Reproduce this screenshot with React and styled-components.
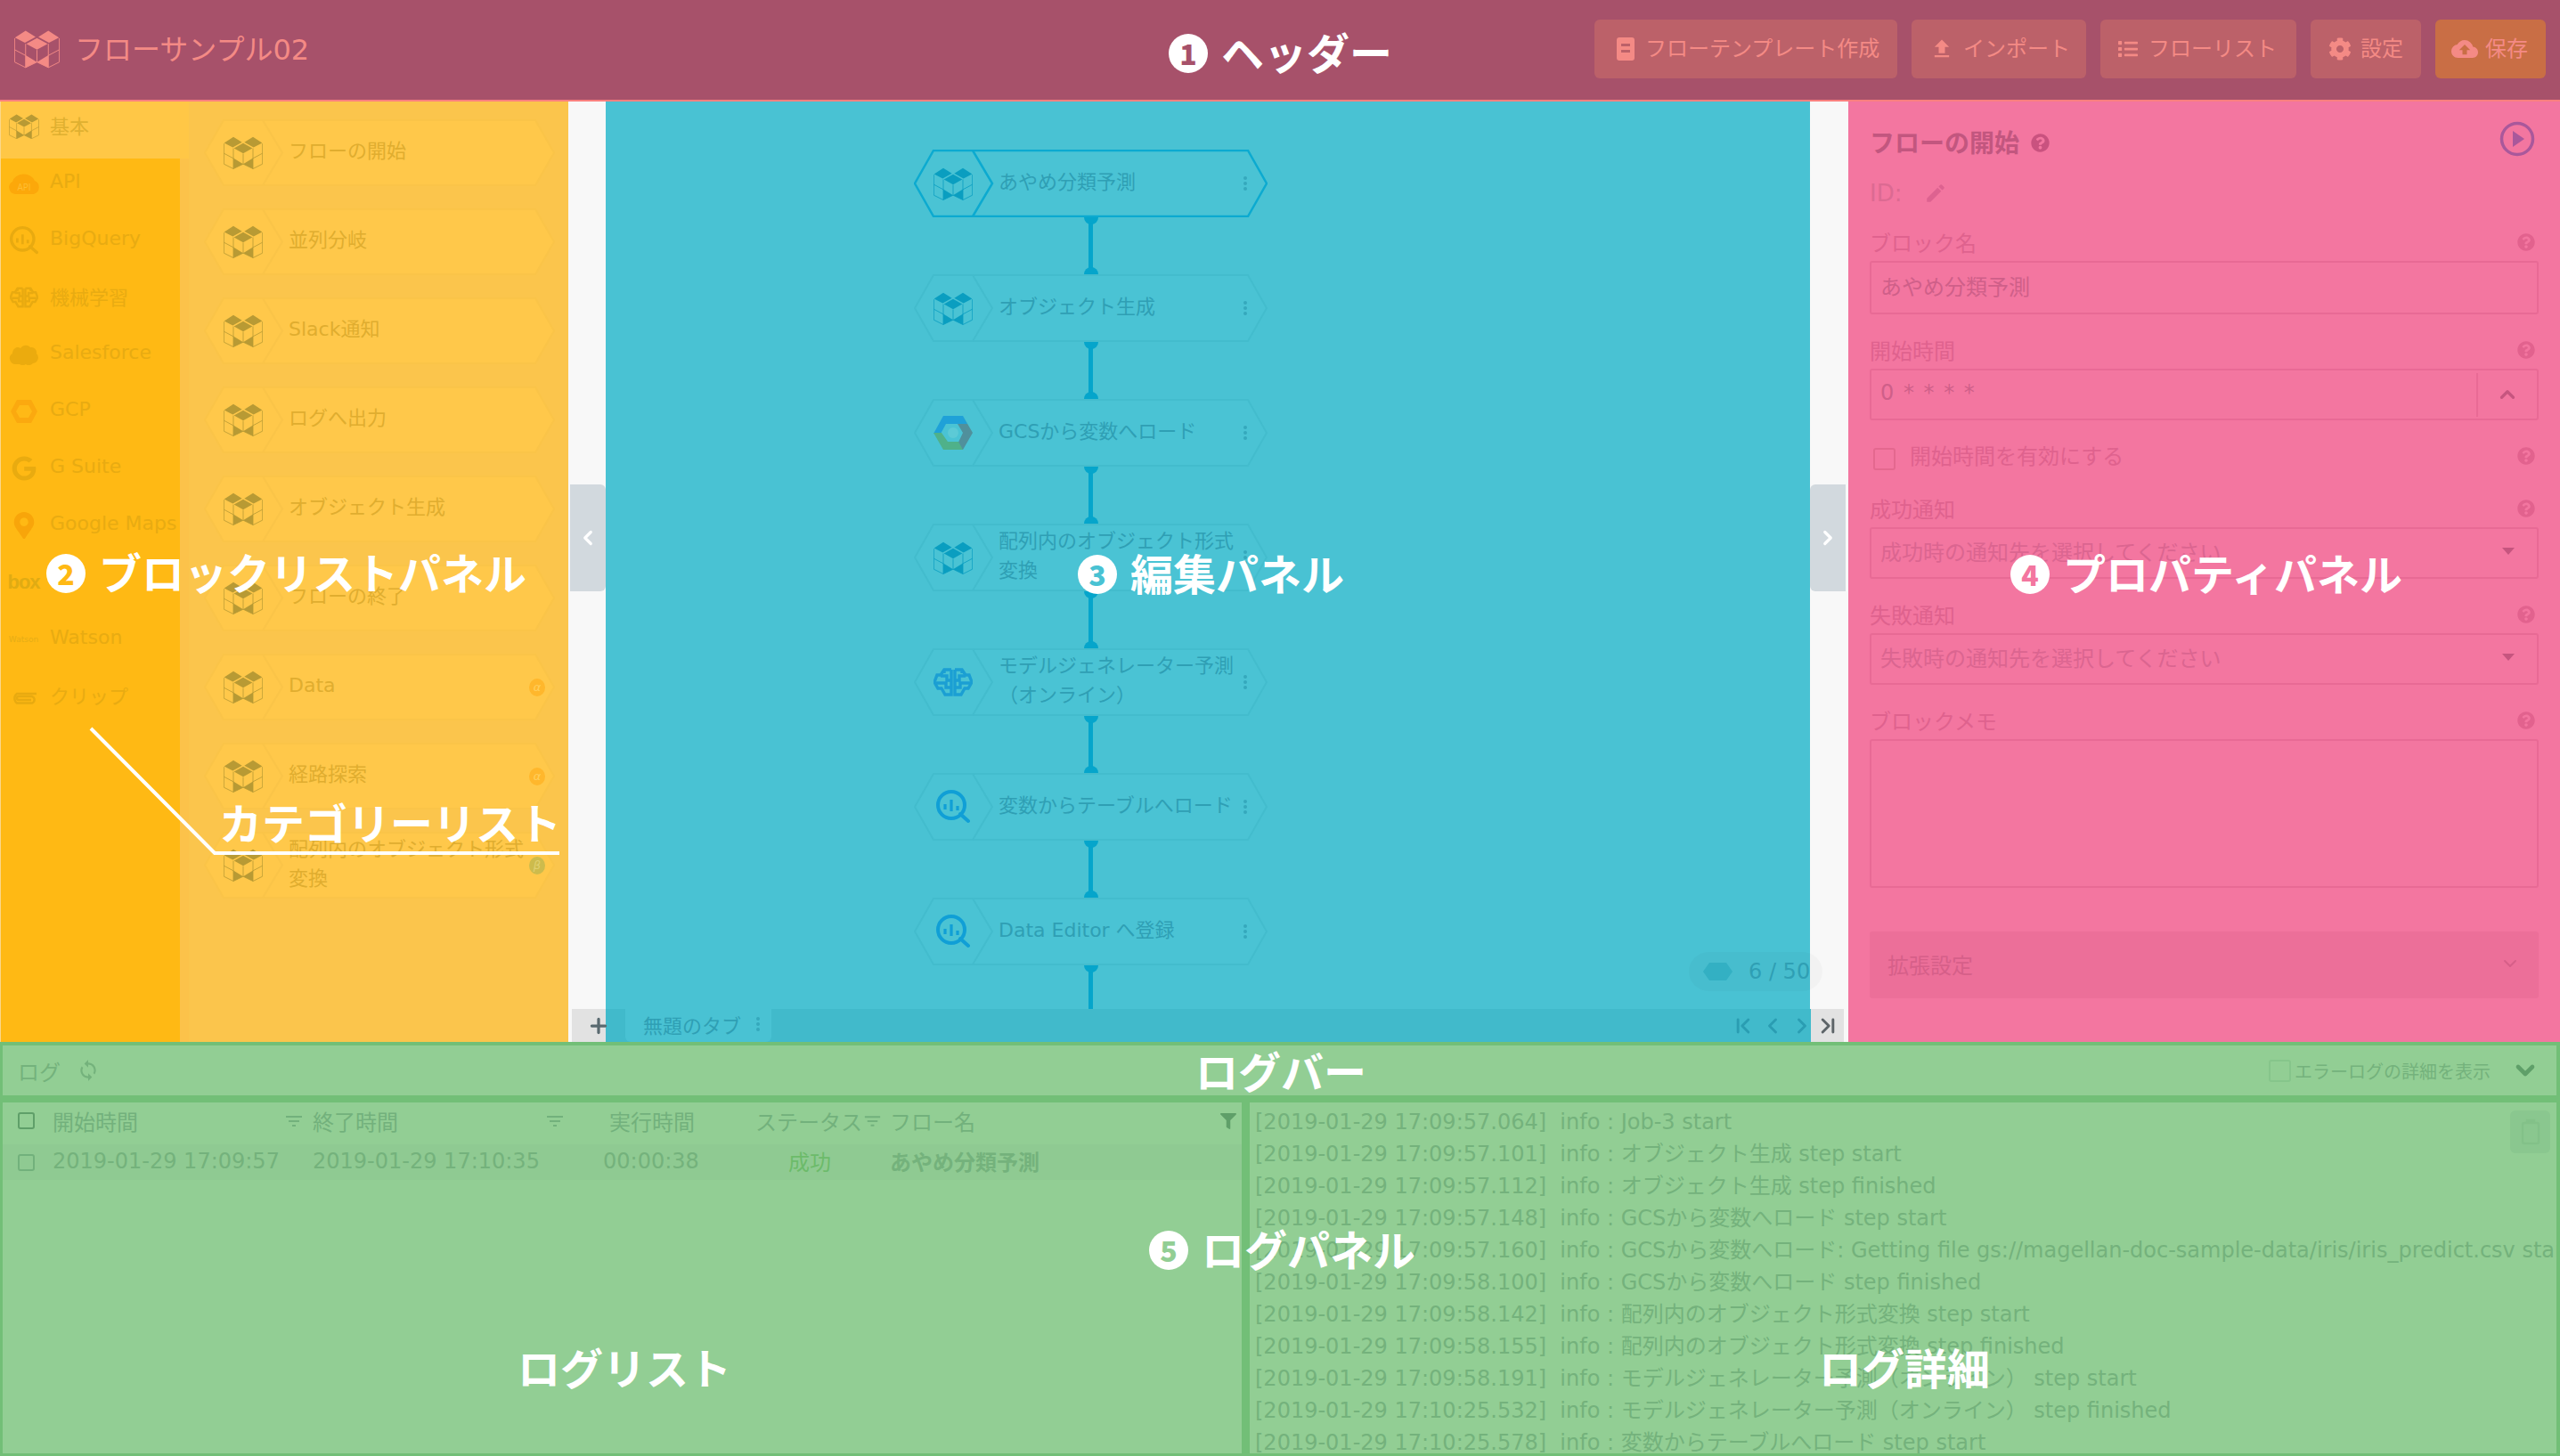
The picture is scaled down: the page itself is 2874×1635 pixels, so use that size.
import React from 'react';
import styled, { createGlobalStyle } from 'styled-components';
import { ChevronLeft, ChevronRight, ChevronUp, ChevronDown, ChevronFirst, ChevronLast, Plus } from 'lucide-react';
import { FaCog, FaList, FaQuestionCircle, FaFilter, FaGoogle, FaMapMarkerAlt } from 'react-icons/fa';
import { MdFileUpload, MdCloudUpload, MdEdit, MdSync, MdFilterList } from 'react-icons/md';

const Global = createGlobalStyle`
  html, body { margin: 0; padding: 0; background: #f8f8f8; }
  * { box-sizing: border-box; }
  body { font-family: "DejaVu Sans", "Noto Sans CJK JP", sans-serif; }
`;

const Page = styled.div`
  position: relative;
  width: 2874px;
  height: 1635px;
  overflow: hidden;
  display: grid;
  grid-template-rows: 114px 1056px 465px;
`;

/* ---------- header ---------- */
const Header = styled.header`
  background: #a7516a;
  border-bottom: 2px solid #f9807f;
  display: flex;
  align-items: center;
  justify-content: space-between;
  padding: 0 16px 2px 16px;
  color: #f48a85;
`;
const Brand = styled.div`
  display: flex;
  align-items: center;
  gap: 17px;
  font-size: 32px;
  span { margin-top: -5px; }
`;
const HeaderActions = styled.div`
  display: flex;
  gap: 16px;
`;
const HeaderButton = styled.div`
  height: 66px;
  border-radius: 6px;
  padding: 0 ${p => p.$pad || 20}px;
  display: flex;
  align-items: center;
  gap: ${p => p.$gap || 10}px;
  font-size: 24px;
  color: #f48a85;
  background: ${p => (p.$save ? '#c96e45' : '#bc6169')};
  width: ${p => p.$w}px;
  white-space: nowrap;
  svg { flex: none; }
  span { margin-top: -5px; }
`;

/* ---------- upper workspace ---------- */
const Workspace = styled.div`
  display: grid;
  grid-template-columns: 212px 426px 1437px 799px;
  min-height: 0;
`;

const CategoryColumn = styled.nav`
  background: #fcc24a;
  display: flex;
  flex-direction: column;
  border-left: 1px solid #fbd78a;
`;
const CategoryRow = styled.div`
  height: 64px;
  flex: none;
  width: ${p => (p.$active ? '211px' : '201px')};
  background: ${p => (p.$active ? '#ffc746' : '#ffb914')};
  display: flex;
  align-items: center;
  padding-bottom: 8px;
  font-size: 22px;
  color: ${p => (p.$active ? '#dfb030' : '#e8ab12')};
`;
const CategoryIcon = styled.span`
  width: 55px;
  flex: none;
  display: flex;
  justify-content: center;
  padding-right: 4px;
  color: #e8aa10;
`;
const CategoryName = styled.span`
  margin-top: -5px;
  white-space: nowrap;
`;
const CategoryFill = styled.div`
  flex: 1;
  width: 201px;
  background: #ffb914;
`;

const BlockListPanel = styled.section`
  background: #fbc54c;
  padding: 20px 0 0 17px;
  display: flex;
  flex-direction: column;
  gap: 25px;
`;

const HexBox = styled.div`
  position: relative;
  flex: none;
  width: ${p => p.$w}px;
  height: ${p => p.$h}px;
  display: flex;
  align-items: center;
  font-size: 22px;
  line-height: 33px;
  color: ${p => p.$color};
`;
const HexSvg = styled.svg`
  position: absolute;
  inset: 0;
  width: 100%;
  height: 100%;
`;
const HexIconSlot = styled.span`
  position: relative;
  width: 88px;
  flex: none;
  display: flex;
  justify-content: center;
`;
const HexLabel = styled.span`
  position: relative;
  margin-left: 7px;
  margin-top: -4px;
  width: 270px;
  flex: none;
`;
const Badge = styled.span`
  position: relative;
  margin-left: auto;
  margin-right: 11px;
  width: 20px;
  height: 20px;
  border-radius: 50%;
  background: ${p => p.$bg};
  color: ${p => p.$fg};
  font-size: 13px;
  line-height: 19px;
  text-align: center;
  font-style: italic;
`;
const Kebab = styled.span`
  position: relative;
  margin-left: auto;
  margin-right: 23px;
  display: flex;
  flex-direction: column;
  gap: 2px;
  i { width: 4px; height: 4px; border-radius: 50%; background: ${p => p.$c}; display: block; }
`;

/* ---------- editor ---------- */
const Editor = styled.section`
  position: relative;
  display: grid;
  grid-template-rows: 1fr 37px;
  min-height: 0;
`;
const EditorMain = styled.div`
  display: grid;
  grid-template-columns: 42px 1352px 43px;
  min-height: 0;
`;
const Gutter = styled.div`
  background: #f8f8f8;
  padding-top: 430px;
  display: flex;
  justify-content: ${p => (p.$side === 'left' ? 'flex-end' : 'flex-start')};
`;
const Toggle = styled.div`
  width: 40px;
  height: 120px;
  background: #d2d9de;
  border-radius: ${p => (p.$side === 'left' ? '0 6px 6px 0' : '6px 0 0 6px')};
  display: flex;
  align-items: center;
  justify-content: center;
  color: #fff;
`;
const Canvas = styled.div`
  background: #49c2d3;
  overflow: hidden;
  padding: 54px 0 0 346px;
`;
const FlowColumn = styled.div`
  width: 397px;
  display: flex;
  flex-direction: column;
  align-items: center;
`;
const Connector = styled.div`
  position: relative;
  flex: none;
  width: 16px;
  height: ${p => p.$h || 64}px;
  background: linear-gradient(#05a5cb, #05a5cb) center / 5px 100% no-repeat;
  &::before {
    content: '';
    position: absolute;
    top: 0; left: 0;
    width: 16px; height: 8px;
    border-radius: 0 0 8px 8px;
    background: #05a5cb;
  }
  &::after {
    content: '';
    display: ${p => (p.$last ? 'none' : 'block')};
    position: absolute;
    bottom: 0; left: 0;
    width: 16px; height: 8px;
    border-radius: 8px 8px 0 0;
    background: #05a5cb;
  }
`;
const TabBar = styled.div`
  display: grid;
  grid-template-columns: 4px 38px 1353px 37px 5px;
  background: #f8f8f8;
`;
const TabGray = styled.div`
  grid-column: ${p => p.$col};
  background: #e2e2e2;
  color: #5d6468;
  display: flex;
  align-items: center;
  justify-content: center;
  z-index: ${p => (p.$top ? 1 : 0)};
`;
const TabMain = styled.div`
  grid-column: 3;
  background: #41bacb;
  display: flex;
  align-items: stretch;
  padding-left: 22px;
  color: #2f9fb4;
`;
const PlusWrap = styled.span`
  display: flex;
  color: #5a6a70;
  transform: translateX(11px);
`;
const Tab = styled.div`
  width: 164px;
  background: #49c2d3;
  border-radius: 0 0 6px 6px;
  padding: 0 0 3px 20px;
  display: flex;
  align-items: center;
  justify-content: flex-start;
  font-size: 22px;
  gap: 17px;
  color: #2f9fb4;
`;
const TabDots = styled.span`
  display: flex;
  flex-direction: column;
  gap: 2px;
  i { width: 4px; height: 4px; border-radius: 50%; background: #35a8bc; display: block; }
`;
const TabNav = styled.div`
  margin-left: auto;
  margin-right: -4px;
  display: flex;
  align-items: center;
  color: #2a9db2;
  gap: 5px;
`;
const Counter = styled.div`
  position: absolute;
  left: 1258px;
  top: 955px;
  width: 150px;
  height: 44px;
  border-radius: 22px;
  background: rgba(0, 0, 0, 0.025);
  display: flex;
  align-items: center;
  padding-left: 16px;
  gap: 18px;
  font-size: 24px;
  color: #2f9fb4;
  white-space: nowrap;
`;

/* ---------- properties ---------- */
const Props = styled.aside`
  background: #f376a0;
  padding: 24px 24px 0 24px;
  color: #df628e;
  font-size: 24px;
  display: flex;
  flex-direction: column;
`;
const TitleRow = styled.div`
  height: 44px;
  display: flex;
  align-items: center;
  gap: 13px;
  font-size: 28px;
  font-weight: 700;
  color: #c2567f;
  span:first-child { margin-top: -3px; }
  svg { color: #c9527f; }
`;
const PlayButton = styled.span`
  margin-left: auto;
  margin-right: 4px;
  margin-top: -8px;
  display: flex;
`;
const IdRow = styled.div`
  margin-top: 15px;
  margin-bottom: 20px;
  height: 40px;
  display: flex;
  align-items: center;
  gap: 25px;
  font-size: 26px;
  color: #dc6a92;
  svg { color: #dd6290; }
`;
const LabelRow = styled.div`
  height: 36px;
  padding: 0 4px 3px 0;
  display: flex;
  align-items: center;
  justify-content: space-between;
  line-height: 1;
  svg { color: #e2628e; margin-top: -4px; }
`;
const Control = styled.div`
  height: ${p => p.$h || 60}px;
  border: 2px solid #e86a95;
  border-radius: 3px;
  display: flex;
  align-items: center;
  padding: 0 0 5px 10px;
  color: ${p => (p.$strong ? '#cf5f89' : '#db6590')};
  margin-bottom: ${p => p.$mb ?? 25}px;
  word-spacing: ${p => p.$ws || 0}px;
`;
const ControlAddon = styled.span`
  margin-left: auto;
  margin-bottom: -5px;
  width: 68px;
  height: 100%;
  border-left: 2px solid #e86a95;
  display: flex;
  align-items: center;
  justify-content: center;
  color: #c6557f;
`;
const Caret = styled.span`
  margin-left: auto;
  margin-right: 25px;
  width: 0;
  height: 0;
  border-left: 7px solid transparent;
  border-right: 7px solid transparent;
  border-top: 8px solid #c6557f;
`;
const CheckRow = styled.div`
  height: 40px;
  margin: 22px 0 22px;
  padding: 0 4px 0 4px;
  display: flex;
  align-items: center;
  gap: 16px;
  span:nth-child(2) { margin-top: -7px; }
  svg { color: #e2628e; margin-left: auto; margin-top: -4px; }
`;
const PinkBox = styled.span`
  width: 25px;
  height: 25px;
  border: 2px solid #e4688f;
  border-radius: 3px;
  margin-top: 2px;
`;
const ExtBar = styled.div`
  margin-top: 24px;
  height: 75px;
  background: #ec6f99;
  border-radius: 3px;
  display: flex;
  align-items: center;
  padding: 0 0 3px 20px;
  color: #d65f89;
  svg { margin-left: auto; margin-right: 20px; }
`;

/* ---------- log ---------- */
const LogArea = styled.section`
  background: #72bf77;
  padding: 4px 4px 3px 3px;
  display: grid;
  grid-template-rows: 56px 394px;
  row-gap: 8px;
  color: #74b27c;
  font-size: 24px;
`;
const LogBar = styled.div`
  background: #92ce94;
  display: flex;
  align-items: center;
  padding: 0 19px 0 17px;
  color: #74b27c;
`;
const LogBarTitle = styled.div`
  display: flex;
  align-items: center;
  gap: 18px;
`;
const LogBarRight = styled.div`
  margin-left: auto;
  display: flex;
  align-items: center;
  font-size: 20px;
  gap: 4px;
  svg { color: #5f9f69; margin-left: 19px; }
`;
const GreenBox = styled.span`
  width: ${p => p.$s || 25}px;
  height: ${p => p.$s || 25}px;
  border: 2px solid ${p => p.$c || '#86c58b'};
  border-radius: 3px;
  flex: none;
`;
const LogPanels = styled.div`
  display: grid;
  grid-template-columns: 1391px 1fr;
  column-gap: 9px;
  min-height: 0;
`;
const LogList = styled.div`
  background: #92ce94;
  overflow: hidden;
`;
const LogGrid = styled.div`
  display: grid;
  grid-template-columns: 56px 292px 326px 170px 152px 395px;
  align-items: center;
  height: ${p => p.$h}px;
  background: ${p => p.$bg || 'transparent'};
  padding-bottom: ${p => p.$pb || 0}px;
`;
const CheckCell = styled.div`
  padding-left: 17px;
  display: flex;
`;
const HeadCell = styled.div`
  display: flex;
  align-items: center;
  justify-content: space-between;
  padding: 0 ${p => p.$pr}px 0 ${p => p.$pl || 0}px;
  color: #72b17c;
  white-space: nowrap;
`;
const Cell = styled.div`
  padding-left: ${p => p.$pl || 0}px;
  white-space: nowrap;
  margin-top: ${p => p.$mt ?? -2}px;
  color: ${p => p.$c || '#74b27c'};
  font-weight: ${p => (p.$bold ? 700 : 400)};
`;
const LogDetail = styled.div`
  position: relative;
  background: #92ce94;
  padding: 4px 0 0 6px;
  overflow: hidden;
  line-height: 36px;
  white-space: pre;
`;
const LogLine = styled.div`
  height: 36px;
`;
const ClipButton = styled.div`
  position: absolute;
  top: 9px;
  right: 7px;
  width: 45px;
  height: 48px;
  border-radius: 6px;
  background: #8ac78f;
  display: flex;
  align-items: center;
  justify-content: center;
`;

/* ---------- annotation overlay ---------- */
const Note = styled.div`
  position: absolute;
  left: ${p => p.$x}px;
  top: ${p => p.$y}px;
  transform: translateY(calc(-50% - 3px));
  display: flex;
  align-items: center;
  gap: 15px;
  color: #fff;
  font-size: 48px;
  font-weight: 700;
  line-height: 1;
  white-space: nowrap;
  font-family: "Noto Sans CJK JP", sans-serif;
`;
const NoteDot = styled.span`
  width: 44px;
  height: 44px;
  border-radius: 50%;
  background: #fff;
  color: ${p => p.$c};
  font-size: 32px;
  font-weight: 900;
  font-family: "Noto Sans CJK JP", sans-serif;
  display: flex;
  align-items: center;
  justify-content: center;
  line-height: 1;
  padding-bottom: 2px;
  transform: translateY(3px);
`;
const NoteLine = styled.svg`
  position: absolute;
  left: 0;
  top: 0;
  width: 2874px;
  height: 1635px;
  pointer-events: none;
`;

/* ---------- drawings ---------- */
const Logo = ({ w = 44, h = 37, c }) => (
  <svg width={w} height={h} viewBox="0 0 132 110" fill="none">
    <g fill={c}>
      <path d="M2 22 33 2 62 20 31 37Z" />
      <path d="M70 20 99 2 130 22 101 37Z" />
      <path d="M35 40 66 23 97 40 66 57Z" />
      <path d="M33 73 66 93 99 73V109L66 93 33 109Z" />
    </g>
    <g stroke={c} strokeWidth="2.5">
      <path d="M1 24V93L33 109 66 93 99 109 131 93V24" />
      <path d="M33 40V109M99 40V109M66 58V93M1 57 33 74M131 57 99 74" />
    </g>
  </svg>
);
const Magnifier = ({ c, s = 38 }) => (
  <svg width={s} height={s} viewBox="0 0 38 38" fill="none" stroke={c}>
    <circle cx="17" cy="17" r="15" strokeWidth="4" />
    <path d="M27 27 36 35" strokeWidth="4" strokeLinecap="round" />
    <path d="M10 16V22M17 11V24M24 18V23" strokeWidth="3.2" />
  </svg>
);
const Brain = ({ c, w = 44, h = 32 }) => (
  <svg width={w} height={h} viewBox="0 0 44 32" fill="none" stroke={c} strokeWidth="3.4">
    <path d="M20 2H12L8 8H4L1 16 5 23H9L13 30H20V2" />
    <path d="M24 2H32L36 8H40L43 16 39 23H35L31 30H24V2" />
    <path d="M8 9H15V14H20M3 17H14V22H20M12 2V6" />
    <path d="M36 9H29V14H24M41 17H30V22H24M32 2V6" />
  </svg>
);
const GcsHex = ({ s = 44 }) => (
  <svg width={s} height={s * 0.91} viewBox="0 0 44 40">
    <path d="M11 1H33L38 10H14L8 21H0Z" fill="#1fa1d8" />
    <path d="M33 1 44 20 33 39H24L33 20 27 10 38 10Z" fill="#50909c" />
    <path d="M0 20 11 39H33L28 30H16L9 20Z" fill="#4fb18a" />
    <circle cx="22" cy="20" r="6" fill="#5ccad6" />
  </svg>
);
const ApiCloud = () => (
  <svg width="36" height="26" viewBox="0 0 36 26">
    <path d="M8 25A7.5 7.5 0 0 1 5 11 13 11 0 0 1 30 10 8 8 0 0 1 29 25Z" fill="#fca80a" />
    <text x="18" y="21" textAnchor="middle" fontSize="10" fontFamily="Open Sans" fill="#ffbe33">API</text>
  </svg>
);
const SfCloud = () => (
  <svg width="34" height="24" viewBox="0 0 34 24">
    <path d="M8 23A6.5 6.5 0 0 1 4 11 6 6 0 0 1 13 5 7 7 0 0 1 24 4 6 6 0 0 1 31 11 6.500 6.500 0 0 1 27 22 6 6 0 0 1 19 23 6 6 0 0 1 12 23Z" fill="#ebab0e" />
  </svg>
);
const GcpHex = () => (
  <svg width="30" height="28" viewBox="0 0 30 28">
    <path d="M7 1H23L30 14 23 27H7L0 14Z" fill="#fba90f" />
    <path d="M10 7H20L24 14 20 21H10L6 14Z" fill="#ffb916" />
  </svg>
);
const BoxMark = styled.span`
  font-size: 22px;
  font-weight: 700;
  font-family: "Liberation Sans", sans-serif;
  letter-spacing: -1px;
  color: #e0ab13;
  line-height: 1;
`;
const WatsonMark = styled.span`
  font-size: 9px;
  color: #e6ad16;
  line-height: 1;
`;
const Clip = () => (
  <svg width="32" height="17" viewBox="0 0 32 17" fill="none" stroke="#e8aa10" strokeWidth="2.4">
    <path d="M30 5H8A6.500 6.500 0 0 0 8 15.500H25A4 4 0 0 0 25 8H10A2 2 0 0 0 10 12H24" />
  </svg>
);
const HeaderBook = () => (
  <svg width="20" height="26" viewBox="0 0 20 26" fill="currentColor">
    <path d="M3 0H17A3 3 0 0 1 20 3V23A3 3 0 0 1 17 26H3A3 3 0 0 1 0 23V3A3 3 0 0 1 3 0Z M5 7V10H15V7Z M5 14V17H15V14Z" fillRule="evenodd" />
  </svg>
);
const Play = () => (
  <svg width="40" height="40" viewBox="0 0 40 40">
    <circle cx="20" cy="20" r="17.500" fill="none" stroke="#a9589b" strokeWidth="3.500" />
    <path d="M15 11 28 20 15 29Z" fill="#a9589b" />
  </svg>
);
const MiniHex = () => (
  <svg width="33" height="20" viewBox="0 0 33 20">
    <path d="M7 0H26L33 10 26 20H7L0 10Z" fill="#33b0c3" />
  </svg>
);
const ClipboardIcon = () => (
  <svg width="22" height="30" viewBox="0 0 22 30" fill="none" stroke="#83c189" strokeWidth="2.500">
    <rect x="2" y="5" width="18" height="23" rx="2" />
    <path d="M7 5V2H15V5" fill="#83c189" />
  </svg>
);

const Hex = ({ w, h, fill, stroke, sw = 2 }) => (
  <HexSvg viewBox={`0 0 ${w} ${h}`} preserveAspectRatio="none" fill={fill} stroke={stroke} strokeWidth={sw}>
    <path d={`M1 ${h / 2} 22 1H${w - 22}L${w - 1} ${h / 2} ${w - 22} ${h - 1}H22Z`} />
    <path d={`M66 1 88 ${h / 2} 66 ${h - 1}`} fill="none" />
  </HexSvg>
);

const Dots = ({ c }) => <Kebab $c={c}><i /><i /><i /></Kebab>;
const Help = () => <FaQuestionCircle size={20} />;

/* ---------- data ---------- */
const categories = [
  ['基本', <Logo w={34} h={28} c="#b89a34" />],
  ['API', <ApiCloud />],
  ['BigQuery', <Magnifier c="#e8aa10" s={32} />],
  ['機械学習', <Brain c="#e8aa10" w={32} h={30} />],
  ['Salesforce', <SfCloud />],
  ['GCP', <GcpHex />],
  ['G Suite', <FaGoogle size={28} color="#e9ab10" />],
  ['Google Maps', <FaMapMarkerAlt size={30} color="#f8a50a" />],
  ['', <BoxMark>box</BoxMark>],
  ['Watson', <WatsonMark>Watson</WatsonMark>],
  ['クリップ', <Clip />],
];
const listBlocks = [
  ['フローの開始'], ['並列分岐'], ['Slack通知'], ['ログへ出力'], ['オブジェクト生成'], ['フローの終了'],
  ['Data', 'α'], ['経路探索', 'α'], ['配列内のオブジェクト形式変換', 'β'],
];
const logoBlue = <Logo c="#0a9ec0" />;
const flowBlocks = [
  ['あやめ分類予測', logoBlue, true],
  ['オブジェクト生成', logoBlue],
  ['GCSから変数へロード', <GcsHex />],
  ['配列内のオブジェクト形式変換', logoBlue],
  ['モデルジェネレーター予測（オンライン）', <Brain c="#1b9fd3" />],
  ['変数からテーブルへロード', <Magnifier c="#109fd6" />],
  ['Data Editor へ登録', <Magnifier c="#109fd6" />],
];
const d = '[2019-01-29 ';
const logs = [
  d + '17:09:57.064]  info : Job-3 start',
  d + '17:09:57.101]  info : オブジェクト生成 step start',
  d + '17:09:57.112]  info : オブジェクト生成 step finished',
  d + '17:09:57.148]  info : GCSから変数へロード step start',
  d + '17:09:57.160]  info : GCSから変数へロード: Getting file gs://magellan-doc-sample-data/iris/iris_predict.csv start',
  d + '17:09:58.100]  info : GCSから変数へロード step finished',
  d + '17:09:58.142]  info : 配列内のオブジェクト形式変換 step start',
  d + '17:09:58.155]  info : 配列内のオブジェクト形式変換 step finished',
  d + '17:09:58.191]  info : モデルジェネレーター予測（オンライン） step start',
  d + '17:10:25.532]  info : モデルジェネレーター予測（オンライン） step finished',
  d + '17:10:25.578]  info : 変数からテーブルへロード step start',
];
const notes = [
  [1312, 60, '1', '#a7516a', 'ヘッダー'],
  [52, 644, '2', '#ffb914', 'ブロックリストパネル'],
  [246, 925, '', '', 'カテゴリーリスト'],
  [1210, 645, '3', '#49c2d3', '編集パネル'],
  [2257, 645, '4', '#f376a0', 'プロパティパネル'],
  [1342, 1204, '', '', 'ログバー'],
  [1290, 1404, '5', '#92ce94', 'ログパネル'],
  [581, 1537, '', '', 'ログリスト'],
  [2042, 1537, '', '', 'ログ詳細'],
];

export default function App() {
  return (
    <Page>
      <Global />
      <Header>
        <Brand>
          <Logo w={51} h={44} c="#f48a85" />
          <span>フローサンプル02</span>
        </Brand>
        <HeaderActions>
          <HeaderButton $w={340} $pad={25} $gap={12}><HeaderBook /><span>フローテンプレート作成</span></HeaderButton>
          <HeaderButton $w={196} $pad={20}><MdFileUpload size={28} /><span>インポート</span></HeaderButton>
          <HeaderButton $w={220} $pad={20} $gap={12}><FaList size={22} /><span>フローリスト</span></HeaderButton>
          <HeaderButton $w={124} $pad={20}><FaCog size={26} /><span>設定</span></HeaderButton>
          <HeaderButton $w={124} $pad={18} $gap={8} $save><MdCloudUpload size={30} /><span>保存</span></HeaderButton>
        </HeaderActions>
      </Header>

      <Workspace>
        <CategoryColumn>
          {categories.map(([name, icon], i) => (
            <CategoryRow key={i} $active={i === 0}>
              <CategoryIcon>{icon}</CategoryIcon>
              <CategoryName>{name}</CategoryName>
            </CategoryRow>
          ))}
          <CategoryFill />
        </CategoryColumn>

        <BlockListPanel>
          {listBlocks.map(([name, badge]) => (
            <HexBox key={name} $w={394} $h={75} $color="#e0ad2f">
              <Hex w={394} h={75} fill="#ffc84a" stroke="#fac448" />
              <HexIconSlot><Logo c="#b89a34" /></HexIconSlot>
              <HexLabel>{name}</HexLabel>
              {badge && (
                <Badge $bg={badge === 'α' ? '#ffb72c' : '#cdbb4c'} $fg={badge === 'α' ? '#ffcf5c' : '#e0d070'}>{badge}</Badge>
              )}
            </HexBox>
          ))}
        </BlockListPanel>

        <Editor>
          <EditorMain>
            <Gutter $side="left">
              <Toggle $side="left"><ChevronLeft size={26} strokeWidth={3} /></Toggle>
            </Gutter>
            <Canvas>
              <FlowColumn>
                {flowBlocks.map(([name, icon, selected], i) => (
                  <React.Fragment key={name}>
                    <HexBox $w={397} $h={76} $color="#2f9fb4">
                      <Hex
                        w={397}
                        h={76}
                        fill="#4ac3d4"
                        stroke={selected ? '#0caad0' : '#43bccd'}
                        sw={selected ? 2.5 : 2}
                      />
                      <HexIconSlot>{icon}</HexIconSlot>
                      <HexLabel>{name}</HexLabel>
                      <Dots c="#35a8bc" />
                    </HexBox>
                    <Connector $h={i === flowBlocks.length - 1 ? 50 : 64} $last={i === flowBlocks.length - 1} />
                  </React.Fragment>
                ))}
              </FlowColumn>
            </Canvas>
            <Gutter $side="right">
              <Toggle $side="right"><ChevronRight size={26} strokeWidth={3} /></Toggle>
            </Gutter>
          </EditorMain>
          <TabBar>
            <TabGray $col={2} $top>
              <PlusWrap><Plus size={26} strokeWidth={3} /></PlusWrap>
            </TabGray>
            <TabMain>
              <Tab>無題のタブ<TabDots><i /><i /><i /></TabDots></Tab>
              <TabNav>
                <ChevronFirst size={28} strokeWidth={2.500} />
                <ChevronLeft size={28} strokeWidth={2.500} />
                <ChevronRight size={28} strokeWidth={2.500} />
              </TabNav>
            </TabMain>
            <TabGray $col={4}><ChevronLast size={28} strokeWidth={2.500} /></TabGray>
          </TabBar>
          <Counter><MiniHex />6 / 50</Counter>
        </Editor>

        <Props>
          <TitleRow>
            <span>フローの開始</span><FaQuestionCircle size={21} />
            <PlayButton><Play /></PlayButton>
          </TitleRow>
          <IdRow>ID: <MdEdit size={26} /></IdRow>

          <LabelRow>ブロック名<Help /></LabelRow>
          <Control $strong>あやめ分類予測</Control>

          <LabelRow>開始時間<Help /></LabelRow>
          <Control $h={58} $mb={0} $strong $ws={3}>
            0 * * * *
            <ControlAddon><ChevronUp size={26} strokeWidth={3} /></ControlAddon>
          </Control>
          <CheckRow><PinkBox /><span>開始時間を有効にする</span><Help /></CheckRow>

          <LabelRow>成功通知<Help /></LabelRow>
          <Control $h={58}>成功時の通知先を選択してください<Caret /></Control>

          <LabelRow>失敗通知<Help /></LabelRow>
          <Control $h={58}>失敗時の通知先を選択してください<Caret /></Control>

          <LabelRow>ブロックメモ<Help /></LabelRow>
          <Control $h={167} />

          <ExtBar>拡張設定<ChevronDown size={24} /></ExtBar>
        </Props>
      </Workspace>

      <LogArea>
        <LogBar>
          <LogBarTitle>ログ<MdSync size={26} /></LogBarTitle>
          <LogBarRight>
            <GreenBox />
            エラーログの詳細を表示
            <ChevronDown size={32} strokeWidth={3.500} />
          </LogBarRight>
        </LogBar>
        <LogPanels>
          <LogList>
            <LogGrid $h={47} $pb={6}>
              <CheckCell><GreenBox $s={19} $c="#5f9f69" /></CheckCell>
              <HeadCell $pr={9}>開始時間<MdFilterList size={24} /></HeadCell>
              <HeadCell $pr={42}>終了時間<MdFilterList size={24} /></HeadCell>
              <HeadCell $pr={0} $pl={7}>実行時間</HeadCell>
              <HeadCell $pr={8} $pl={1}>ステータス<MdFilterList size={24} /></HeadCell>
              <HeadCell $pr={6}>フロー名<FaFilter size={18} color="#5f9f69" /></HeadCell>
            </LogGrid>
            <LogGrid $h={40} $bg="#8fca92">
              <CheckCell><GreenBox $s={19} $c="#72b17c" /></CheckCell>
              <Cell>2019-01-29 17:09:57</Cell>
              <Cell>2019-01-29 17:10:35</Cell>
              <Cell>00:00:38</Cell>
              <Cell $pl={38} $mt={-4} $c="#6cbb6a">成功</Cell>
              <Cell $bold $mt={-4}>あやめ分類予測</Cell>
            </LogGrid>
          </LogList>
          <LogDetail>
            {logs.map(l => <LogLine key={l}>{l}</LogLine>)}
            <ClipButton><ClipboardIcon /></ClipButton>
          </LogDetail>
        </LogPanels>
      </LogArea>

      <NoteLine viewBox="0 0 2874 1635" fill="none" stroke="#fff" strokeWidth="4">
        <path d="M102 818 241 958H628" />
      </NoteLine>
      {notes.map(([x, y, n, c, text]) => (
        <Note key={text} $x={x} $y={y}>
          {n && <NoteDot $c={c}>{n}</NoteDot>}
          {text}
        </Note>
      ))}
    </Page>
  );
}
